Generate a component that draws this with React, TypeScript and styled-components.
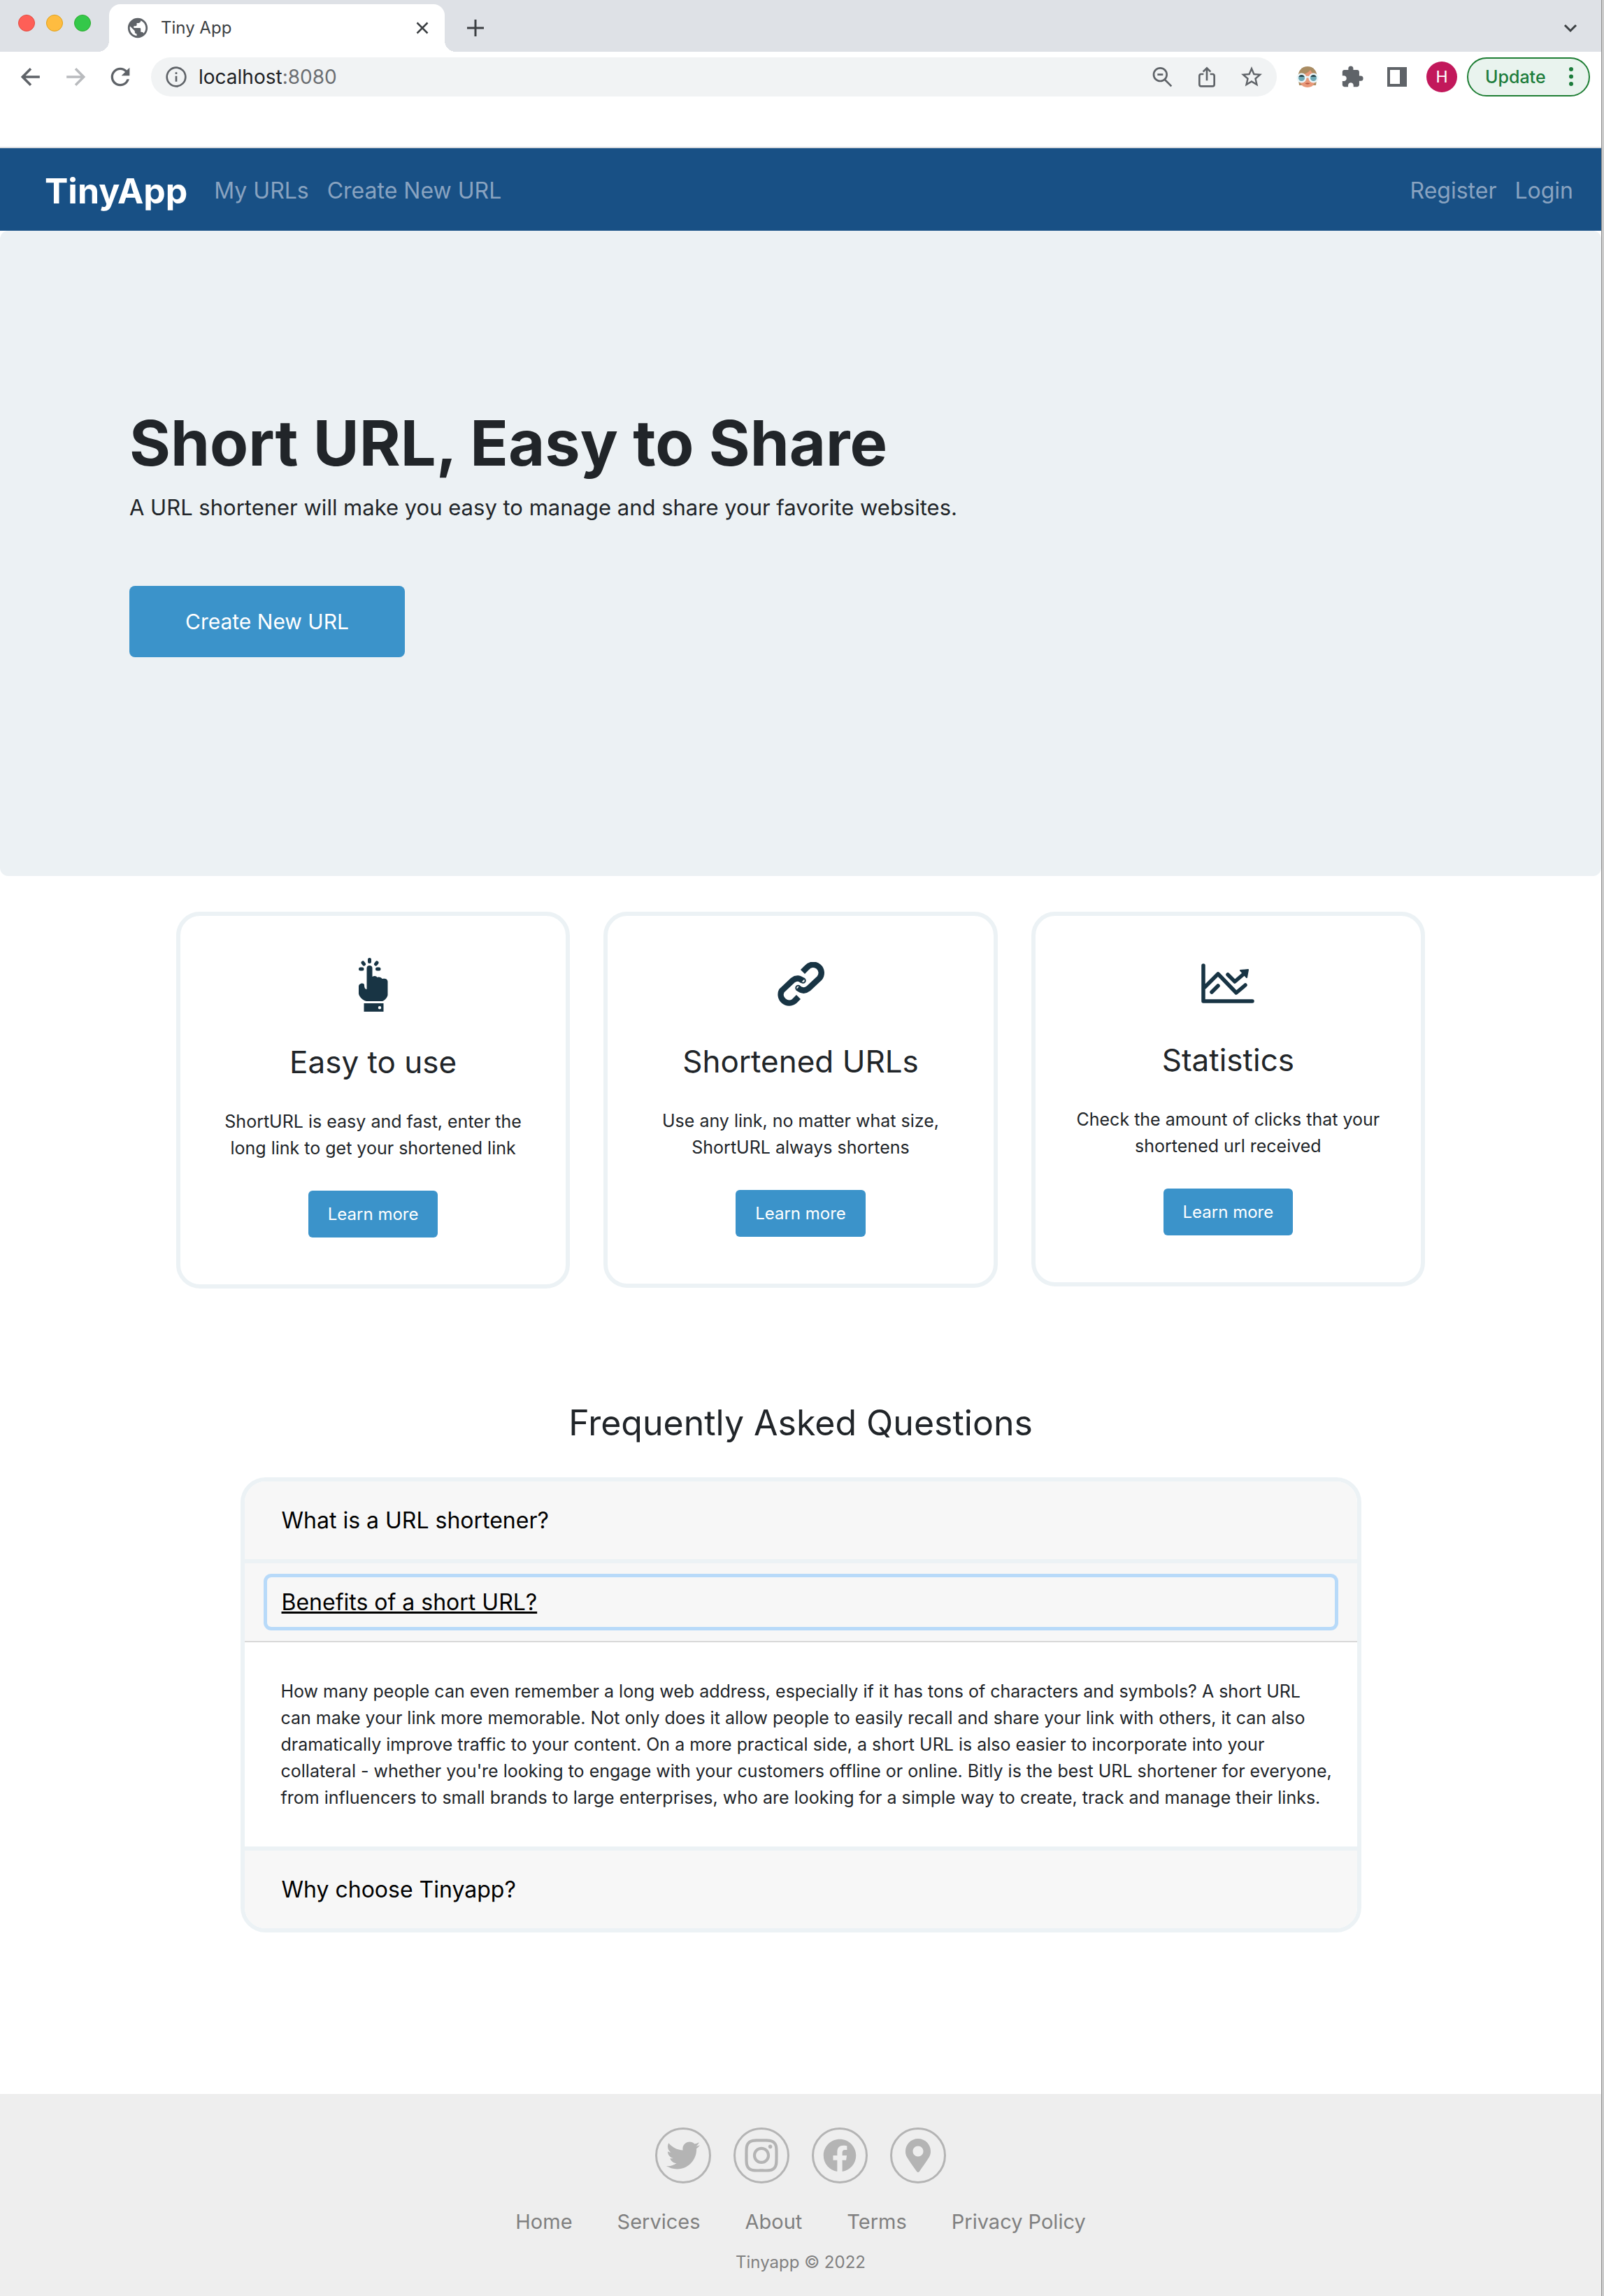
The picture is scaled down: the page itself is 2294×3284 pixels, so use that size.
import React, { useState } from "react";
import styled, { createGlobalStyle } from "styled-components";
import { FaTwitter, FaInstagram, FaFacebook, FaMapMarkerAlt } from "react-icons/fa";
import { MdPublic, MdExtension, MdStarOutline, MdRefresh } from "react-icons/md";

const GlobalStyle = createGlobalStyle`
  *, *::before, *::after { box-sizing: border-box; }
  body { margin: 0; background: #fff; color: #212529; font-family: Inter, Roboto, sans-serif; }
  h1, h2, h3, p, ul { margin: 0; padding: 0; }
  ul { list-style: none; }
  a { color: inherit; text-decoration: none; }
  button, input { font: inherit; color: inherit; border: 0; background: none; padding: 0; margin: 0; cursor: pointer; }
  svg { display: block; flex-shrink: 0; }
`;

const Desktop = styled.div`
  padding-right: 3px;
  background: #cbcbcb;
`;
const Window = styled.div`
  min-height: 100vh;
  display: flex;
  flex-direction: column;
  border-right: 1px solid #8e8e8e;
  background: #fff;
`;

/* Browser chrome */
const TabStrip = styled.div`
  height: 74px;
  display: flex;
  background: #dee1e6;
  padding: 6px 32px 0 26px;
`;
const Lights = styled.div`
  display: flex;
  gap: 16px;
  width: 130px;
  padding-top: 15px;
`;
const Light = styled.button<{ $fill: string; $edge: string }>`
  width: 24px;
  height: 24px;
  border-radius: 50%;
  background: ${(p) => p.$fill};
  border: 1px solid ${(p) => p.$edge};
`;
const Tab = styled.div`
  position: relative;
  width: 480px;
  display: flex;
  align-items: center;
  gap: 16px;
  padding: 0 22px 0 24px;
  background: #fff;
  border-radius: 16px 16px 0 0;
  color: #3c4043;
  font-size: 24px;
  line-height: 32px;
  &::before, &::after {
    content: "";
    position: absolute;
    bottom: 0;
    width: 16px;
    height: 16px;
  }
  &::before { left: -16px; background: radial-gradient(circle at 0 0, #dee1e6 16px, #fff 16px); }
  &::after { right: -16px; background: radial-gradient(circle at 100% 0, #dee1e6 16px, #fff 16px); }
`;
const TabTitle = styled.span`flex: 1;`;
const StripButton = styled.button<{ $push?: boolean }>`
  display: flex;
  align-items: center;
  margin-left: ${(p) => (p.$push ? "auto" : "32px")};
  color: #3c4043;
`;
const Toolbar = styled.div`
  display: flex;
  align-items: center;
  height: 72px;
  padding: 0 16px 0 28px;
  color: #5f6368;
`;
const NavButtons = styled.div`
  display: flex;
  gap: 32px;
  width: 188px;
`;
const IconButton = styled.button<{ $faded?: boolean }>`
  display: flex;
  width: 32px;
  height: 32px;
  align-items: center;
  justify-content: center;
  color: ${(p) => (p.$faded ? "#b9bbbe" : "#5f6368")};
`;
const Omnibox = styled.form`
  flex: 1;
  display: flex;
  align-items: center;
  height: 56px;
  padding: 0 20px;
  gap: 16px;
  border-radius: 28px;
  background: #f1f3f4;
`;
const Address = styled.div`
  flex: 1;
  color: #6b6e72;
  font-size: 28px;
  line-height: 36px;
`;
const Host = styled.span`color: #202124;`;
const Actions = styled.div`
  display: flex;
  gap: 32px;
`;
const Extensions = styled(Actions)`
  padding: 0 26px 0 28px;
`;
const Profile = styled.button`
  width: 44px;
  height: 44px;
  border-radius: 50%;
  background: #c2185b;
  color: #fff;
  font: 24px/44px Roboto, sans-serif;
`;
const Update = styled.button`
  display: flex;
  align-items: center;
  justify-content: space-between;
  width: 176px;
  height: 56px;
  margin-left: 14px;
  padding: 0 22px 0 24px;
  border: 2px solid #1e7e34;
  border-radius: 28px;
  background: #e9f3ee;
  color: #1c7c3b;
  font-size: 25px;
  font-weight: 500;
`;
const BookmarkBar = styled.div`
  height: 66px;
  border-bottom: 2px solid #dadce0;
`;

/* Page */
const Navbar = styled.nav`
  display: flex;
  align-items: center;
  height: 118px;
  padding: 4px 40px 0 64px;
  background: #185085;
  color: #89a3c0;
  font-size: 32px;
  line-height: 48px;
`;
const Brand = styled.a`
  margin-right: 38px;
  color: #fff;
  font-size: 50px;
  font-weight: 700;
`;
const NavLinks = styled.div<{ $end?: boolean }>`
  display: flex;
  gap: 26px;
  margin-left: ${(p) => (p.$end ? "auto" : "0")};
`;
const Hero = styled.header`
  display: flex;
  flex-direction: column;
  align-items: flex-start;
  padding: 252px 185px 313px;
  border-radius: 12px;
  background: #ecf1f4;
`;
const HeroTitle = styled.h1`
  font-size: 90px;
  line-height: 104px;
  font-weight: 700;
`;
const HeroText = styled.p`
  margin: 16px 0 88px;
  font-size: 31px;
  line-height: 48px;
`;
const HeroButton = styled.button`
  height: 102px;
  padding: 0 80px;
  border-radius: 8px;
  background: #3b93ca;
  color: #fff;
  font-size: 30px;
`;
const Cards = styled.section`
  display: grid;
  grid-template-columns: repeat(3, 1fr);
  align-items: start;
  gap: 48px;
  width: 78%;
  margin: 51px auto 0;
`;
const Card = styled.article`
  display: flex;
  flex-direction: column;
  align-items: center;
  padding: 42px 54px 67px;
  border: 6px solid #ecf2f5;
  border-radius: 34px;
  text-align: center;
`;
const CardIcon = styled.div<{ $height: number }>`
  display: flex;
  align-items: center;
  height: ${(p) => p.$height}px;
  color: #183444;
`;
const CardTitle = styled.h2`
  margin: 26px 0 38px;
  font-size: 44px;
  line-height: 56px;
  font-weight: 400;
`;
const CardText = styled.p`
  font-size: 25px;
  line-height: 38px;
`;
const CardButton = styled.button`
  height: 67px;
  margin-top: 42px;
  padding: 0 28px;
  border-radius: 6px;
  background: #3b93ca;
  color: #fff;
  font-size: 24px;
`;
const Faq = styled.section`
  width: 70%;
  margin: 158px auto 231px;
`;
const FaqTitle = styled.h2`
  margin-bottom: 44px;
  font-size: 50px;
  line-height: 68px;
  font-weight: 400;
  text-align: center;
`;
const Accordion = styled.div`
  overflow: hidden;
  border: 6px solid #ecf2f5;
  border-radius: 36px;
`;
const Item = styled.div`
  & + & { border-top: 6px solid #ecf2f5; }
`;
const ItemHeader = styled.h3<{ $open: boolean }>`
  padding: 20px 32px;
  background: #f7f7f7;
  border-bottom: ${(p) => (p.$open ? "2px solid #d8d8d8" : "0")};
  font-weight: 400;
`;
const ItemButton = styled.button<{ $open: boolean }>`
  width: 100%;
  height: 71px;
  padding: 0 21px;
  border-radius: 6px;
  color: #000;
  font-size: 32px;
  text-align: left;
  text-decoration: ${(p) => (p.$open ? "underline" : "none")};
  text-decoration-thickness: 3px;
  box-shadow: ${(p) => (p.$open ? "0 0 0 5px #b8daf9" : "none")};
  outline: none;
`;
const ItemBody = styled.p`
  padding: 51px 20px 51px 52px;
  font-size: 25px;
  line-height: 38px;
  white-space: pre-line;
`;
const Footer = styled.footer`
  flex: 1;
  padding: 48px 0 20px;
  background: #eee;
  color: #808080;
  text-align: center;
`;
const Row = styled.ul<{ $gap: number }>`
  display: flex;
  justify-content: center;
  gap: ${(p) => p.$gap}px;
`;
const Social = styled.a`
  display: flex;
  align-items: center;
  justify-content: center;
  width: 80px;
  height: 80px;
  border: 3px solid #b4b4b4;
  border-radius: 50%;
  color: #b4b4b4;
`;
const FooterLinks = styled(Row)`
  margin-top: 32px;
  font-size: 29px;
  line-height: 46px;
`;
const Copyright = styled.p`
  margin-top: 16px;
  font-size: 24px;
  line-height: 38px;
`;

const Stroke = ({ d, size = 28, width = 2 }: { d: string; size?: number; width?: number }) => (
  <svg width={size} height={size} viewBox="0 0 24 24" fill="none" stroke="currentColor" strokeWidth={width}>
    <path d={d} />
  </svg>
);

const Face = () => (
  <svg width="32" height="30" viewBox="0 0 32 30">
    <path d="M2.500 15C2.500 6 8 0 16 0s13.500 6 13.500 15L28 27H4z" fill="#a98c62" />
    <path d="M6 12c6-1 11-3 14-7 1 3 4 5 7 7v8c0 6-5 10-11 10S5 26 5 20z" fill="#e8997a" />
    <circle cx="7.500" cy="16.500" r="5.500" fill="#6fa9b5" />
    <circle cx="24.500" cy="16.500" r="5.500" fill="#6fa9b5" />
    <path d="M3 15a4.500 4.500 0 0 1 9 0zM20 15a4.500 4.500 0 0 1 9 0z" fill="#2c4a52" />
    <g fill="none" stroke="#eaf6fa" strokeWidth="2.500">
      <circle cx="7.500" cy="16.500" r="5.800" />
      <circle cx="24.500" cy="16.500" r="5.800" />
      <path d="M13 16q3-2 6 0" />
    </g>
    <path d="M12.500 24.500q3.500-2 7 0-3.500 2-7 0z" fill="#b4503f" />
  </svg>
);

const HandIcon = () => (
  <svg width="42" height="77" viewBox="0 0 42 77" fill="currentColor">
    <g stroke="currentColor" strokeWidth="5" strokeLinecap="round">
      <path d="M15.500 2.500v3M6 7l1.500 2M26 7l-1.500 2M2.500 16h2.500M26.500 16h2.500" />
    </g>
    <path d="M11.500 15a4 4 0 0 1 8 0v12c3-2 6-1 7 1 3-1 6 0 7 2 4-1 8 0 8 4v19c0 3-5 9-8 9H11C6 61 0 55 0 51V41c0-5 8-6 8-2 0 3 1 6 3.500 6z" />
    <path fillRule="evenodd" d="M7.500 65h28v12h-28zM30 69a2.200 2.200 0 1 0 0 4.400 2.200 2.200 0 0 0 0-4.400z" />
  </svg>
);

const LinkIcon = () => (
  <svg width="68" height="64" viewBox="0 0 68 64" fill="none" stroke="currentColor" strokeWidth="8.500">
    <path d="M37 14l6-6a11 11 0 0 1 18 15L45 38c-5 4-10 3-15-1" />
    <path d="M31 50l-6 6A12 12 0 0 1 7 41L23 26c5-4 10-3 14 1" />
    <circle cx="30.500" cy="37" r="1" strokeWidth="6.500" />
    <circle cx="37.500" cy="26.500" r="1" strokeWidth="6.500" />
  </svg>
);

const ChartIcon = () => (
  <svg width="76" height="58" viewBox="0 0 76 58" fill="none" stroke="currentColor" strokeWidth="5.500" strokeLinecap="round" strokeLinejoin="round">
    <path d="M3 3v51h70M5 34l19-19 26 27 13-11M15 41l9-9M38 16l10 10 14-12" />
    <path d="M56 10l11-1-2 11z" fill="currentColor" strokeWidth="2" />
  </svg>
);

const cards = [
  { title: "Easy to use", lines: ["ShortURL is easy and fast, enter the", "long link to get your shortened link"], icon: <HandIcon />, height: 113 },
  { title: "Shortened URLs", lines: ["Use any link, no matter what size,", "ShortURL always shortens"], icon: <LinkIcon />, height: 112 },
  { title: "Statistics", lines: ["Check the amount of clicks that your", "shortened url received"], icon: <ChartIcon />, height: 110 },
];

const questions = [
  { title: "What is a URL shortener?", body: "A URL shortener turns a long web address into a short link." },
  {
    title: "Benefits of a short URL?",
    body: `How many people can even remember a long web address, especially if it has tons of characters and symbols? A short URL
can make your link more memorable. Not only does it allow people to easily recall and share your link with others, it can also
dramatically improve traffic to your content. On a more practical side, a short URL is also easier to incorporate into your
collateral - whether you're looking to engage with your customers offline or online. Bitly is the best URL shortener for everyone,
from influencers to small brands to large enterprises, who are looking for a simple way to create, track and manage their links.`,
  },
  { title: "Why choose Tinyapp?", body: "It is quick and free." },
];

const socials = [
  { name: "Twitter", icon: <FaTwitter size={48} /> },
  { name: "Instagram", icon: <FaInstagram size={54} /> },
  { name: "Facebook", icon: <FaFacebook size={48} /> },
  { name: "Location", icon: <FaMapMarkerAlt size={48} /> },
];

export default function App() {
  const [open, setOpen] = useState(1);
  return (
    <Desktop>
      <GlobalStyle />
      <Window>
        <TabStrip>
          <Lights>
            <Light aria-label="Close window" $fill="#fe5f57" $edge="#e24b41" />
            <Light aria-label="Minimise window" $fill="#febc40" $edge="#e1a116" />
            <Light aria-label="Zoom window" $fill="#34c84a" $edge="#2dac2f" />
          </Lights>
          <Tab>
            <MdPublic size={34} color="#5f6368" />
            <TabTitle>Tiny App</TabTitle>
            <button aria-label="Close tab"><Stroke size={20} width={3} d="M3 3l18 18M21 3L3 21" /></button>
          </Tab>
          <StripButton aria-label="New tab"><Stroke size={24} width={3} d="M12 0v24M0 12h24" /></StripButton>
          <StripButton aria-label="Search tabs" $push><Stroke size={24} width={3} d="M4 8l8 8 8-8" /></StripButton>
        </TabStrip>
        <Toolbar>
          <NavButtons>
            <IconButton aria-label="Back"><Stroke d="M23 12H2M12 2L2 12l10 10" width={3} /></IconButton>
            <IconButton aria-label="Forward" $faded><Stroke d="M1 12h21M12 2l10 10-10 10" width={3} /></IconButton>
            <IconButton aria-label="Reload"><MdRefresh size={40} /></IconButton>
          </NavButtons>
          <Omnibox>
            <Stroke size={32} d="M12 2a10 10 0 1 0 0 20 10 10 0 0 0 0-20zM12 11v6M12 7v2" />
            <Address><Host>localhost</Host>:8080</Address>
            <Actions>
              <IconButton type="button" aria-label="Zoom out"><Stroke size={32} d="M10 2.500a7 7 0 1 0 0 14 7 7 0 0 0 0-14zM15 15l7 7M7 9.500h6" /></IconButton>
              <IconButton type="button" aria-label="Share"><Stroke size={32} d="M8.500 9H6a2 2 0 0 0-2 2v9a2 2 0 0 0 2 2h12a2 2 0 0 0 2-2v-9a2 2 0 0 0-2-2h-2.500M12 16V3M8 6.500l4-4 4 4" /></IconButton>
              <IconButton type="button" aria-label="Bookmark"><MdStarOutline size={36} /></IconButton>
            </Actions>
          </Omnibox>
          <Extensions>
            <IconButton aria-label="Extension"><Face /></IconButton>
            <IconButton aria-label="Extensions"><MdExtension size={34} /></IconButton>
            <IconButton aria-label="Side panel">
              <svg width="28" height="28" viewBox="0 0 28 28"><path fillRule="evenodd" fill="currentColor" d="M0 0h28v28H0zM4 4h14v20H4z" /></svg>
            </IconButton>
          </Extensions>
          <Profile>H</Profile>
          <Update>
            Update
            <svg width="6" height="28" viewBox="0 0 6 28" fill="currentColor"><circle cx="3" cy="3" r="3" /><circle cx="3" cy="13.500" r="3" /><circle cx="3" cy="24" r="3" /></svg>
          </Update>
        </Toolbar>
        <BookmarkBar />

        <Navbar>
          <Brand href="#">TinyApp</Brand>
          <NavLinks>
            <a href="#">My URLs</a>
            <a href="#">Create New URL</a>
          </NavLinks>
          <NavLinks $end>
            <a href="#">Register</a>
            <a href="#">Login</a>
          </NavLinks>
        </Navbar>
        <Hero>
          <HeroTitle>Short URL, Easy to Share</HeroTitle>
          <HeroText>A URL shortener will make you easy to manage and share your favorite websites.</HeroText>
          <HeroButton>Create New URL</HeroButton>
        </Hero>
        <Cards>
          {cards.map((c) => (
            <Card key={c.title}>
              <CardIcon $height={c.height}>{c.icon}</CardIcon>
              <CardTitle>{c.title}</CardTitle>
              <CardText>{c.lines[0]}<br />{c.lines[1]}</CardText>
              <CardButton>Learn more</CardButton>
            </Card>
          ))}
        </Cards>
        <Faq>
          <FaqTitle>Frequently Asked Questions</FaqTitle>
          <Accordion>
            {questions.map((q, i) => (
              <Item key={q.title}>
                <ItemHeader $open={open === i}>
                  <ItemButton $open={open === i} aria-expanded={open === i} onClick={() => setOpen(open === i ? -1 : i)}>{q.title}</ItemButton>
                </ItemHeader>
                {open === i && <ItemBody>{q.body}</ItemBody>}
              </Item>
            ))}
          </Accordion>
        </Faq>
        <Footer>
          <Row $gap={32}>
            {socials.map((s) => (
              <li key={s.name}><Social href="#" aria-label={s.name}>{s.icon}</Social></li>
            ))}
          </Row>
          <FooterLinks $gap={64}>
            {["Home", "Services", "About", "Terms", "Privacy Policy"].map((t) => (
              <li key={t}><a href="#">{t}</a></li>
            ))}
          </FooterLinks>
          <Copyright>Tinyapp © 2022</Copyright>
        </Footer>
      </Window>
    </Desktop>
  );
}
